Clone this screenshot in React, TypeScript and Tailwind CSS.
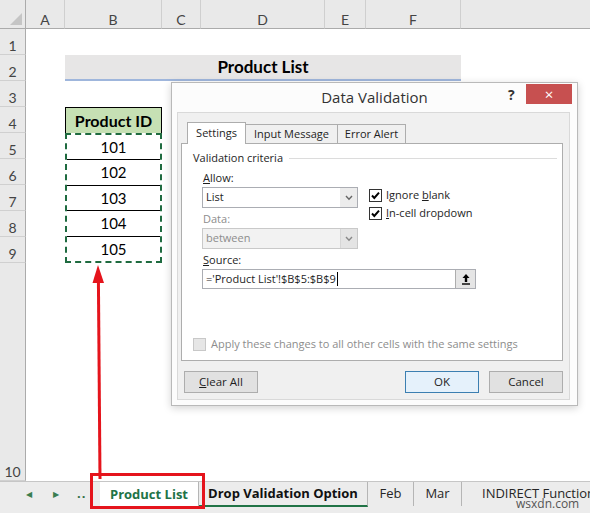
import React from 'react';

const cols = ['A', 'B', 'C', 'D', 'E', 'F', ''];
const ids = [101, 102, 103, 104, 105];

function Check({ on, disabled }: { on?: boolean; disabled?: boolean }) {
  return (
    <span
      className={`inline-flex items-center justify-center w-[13px] h-[13px] border ${
        disabled ? 'border-[#c8c8c8] bg-[#e6e6e6]' : 'border-[#333] bg-white'
      }`}
    >
      {on && (
        <svg viewBox="0 0 11 11" className="w-[11px] h-[11px]">
          <path d="M2 5.5l2.3 2.4L9 2.6" fill="none" stroke="#000" strokeWidth={2} />
        </svg>
      )}
    </span>
  );
}

function Chevron({ color }: { color: string }) {
  return (
    <svg viewBox="0 0 8 6" className="w-[8px] h-[6px]">
      <path d="M1 1l3 3.2L7 1" fill="none" stroke={color} strokeWidth={1.4} />
    </svg>
  );
}

function DataValidation() {
  return (
    <div className="absolute left-[171px] top-[82px] w-[407px] h-[324px] bg-[#fcfcfc] border border-[#b9b9b9] shadow-[0_2px_8px_rgba(0,0,0,0.18)] flex flex-col font-['Open_Sans'] text-[#1e1e1e]">
      {/* title bar */}
      <div className="h-[29px] relative flex items-center justify-center">
        <span className="text-[15px] text-[#333]">Data Validation</span>
        <span className="absolute left-[336px] top-[1px] text-[14px] font-bold text-[#333]">?</span>
        <div className="absolute left-[354px] top-[1px] w-[46px] h-[20px] bg-[#c75050] flex items-center justify-center text-white text-[15px] leading-none">
          ×
        </div>
      </div>

      <div className="ml-[5px] mr-[7px] flex-1 mb-[5px] bg-[#f0f0f0] border border-[#d9d9d9] flex flex-col px-[3px]">
        {/* tabs */}
        <div className="flex items-end h-[30px] pl-[6px] text-[11px]">
          <div className="w-[59px] h-[22px] bg-white border border-b-0 border-[#adadad] flex items-center justify-center relative top-[1px] z-10">
            Settings
          </div>
          <div className="w-[92px] h-[19px] bg-[#f0f0f0] border border-l-0 border-b-0 border-[#adadad] flex items-center justify-center">
            Input Message
          </div>
          <div className="w-[68px] h-[19px] bg-[#f0f0f0] border border-l-0 border-b-0 border-[#adadad] flex items-center justify-center">
            Error Alert
          </div>
        </div>

        {/* settings panel */}
        <div className="h-[218px] w-[382px] bg-white border border-[#adadad] text-[11px] pl-[11px] pt-[5px] flex flex-col">
          <div className="flex items-center gap-[6px] h-[18px]">
            <span>Validation criteria</span>
            <div className="flex-1 h-px bg-[#dcdcdc] mr-[5px]" />
          </div>
          <div className="pl-[9px] flex flex-col">
            <div className="flex gap-[11px]">
              <div className="flex flex-col w-[156px]">
                <span className="h-[18px] leading-[18px] mt-[2px] pl-[1px]">
                  <u>A</u>llow:
                </span>
                <div className="h-[21px] border border-[#abadb3] bg-white flex items-center">
                  <span className="flex-1 pl-[3px]">List</span>
                  <div className="w-[17px] h-full bg-[#ececec] flex items-center justify-center">
                    <Chevron color="#666" />
                  </div>
                </div>
                <span className="h-[18px] leading-[18px] mt-[2px] text-[#8d8d8d] pl-[1px]">Data:</span>
                <div className="h-[21px] border border-[#c9c9c9] bg-[#f2f2f2] flex items-center text-[#8d8d8d]">
                  <span className="flex-1 pl-[3px]">between</span>
                  <div className="w-[17px] h-full bg-[#e4e4e4] flex items-center justify-center border-l border-[#d6d6d6]">
                    <Chevron color="#888" />
                  </div>
                </div>
              </div>
              <div className="flex flex-col pt-[22px] gap-[5px]">
                <label className="flex items-center gap-[4px] h-[13px]">
                  <Check on />
                  <span>
                    Ignore <u>b</u>lank
                  </span>
                </label>
                <label className="flex items-center gap-[4px] h-[13px]">
                  <Check on />
                  <span>
                    <u>I</u>n-cell dropdown
                  </span>
                </label>
              </div>
            </div>
            <span className="h-[18px] leading-[18px] mt-[2px] pl-[1px]">
              <u>S</u>ource:
            </span>
            <div className="h-[20px] w-[274px] border border-[#abadb3] bg-white flex items-center">
              <span className="flex-1 pl-[3px] flex items-center">
                ='Product List'!$B$5:$B$9
                <span className="inline-block w-px h-[14px] bg-black ml-[1px]" />
              </span>
              <div className="w-[20px] h-[18px] bg-[#e5e5e5] border-l border-[#adadad] flex items-center justify-center">
                <svg viewBox="0 0 10 12" className="w-[10px] h-[12px]">
                  <path d="M5 1L1.5 5h2.3v4h2.4V5h2.3z" fill="#000" />
                  <rect x="1" y="10.3" width="8" height="1.4" fill="#000" />
                </svg>
              </div>
            </div>
          </div>
          <label className="flex items-center gap-[5px] mt-[47px] text-[#8d8d8d]">
            <Check disabled />
            <span>Apply these changes to all other cells with the same settings</span>
          </label>
        </div>

        {/* buttons */}
        <div className="flex items-center mt-[10px] px-[3px] text-[11.5px]">
          <div className="w-[74px] h-[22px] bg-[#e1e1e1] border border-[#adadad] flex items-center justify-center">
            <span>
              <u>C</u>lear All
            </span>
          </div>
          <div className="flex-1" />
          <div className="w-[74px] h-[22px] bg-[#e5f1fb] border border-[#3c7fb1] flex items-center justify-center">
            OK
          </div>
          <div className="w-[74px] h-[22px] ml-[10px] bg-[#e1e1e1] border border-[#adadad] flex items-center justify-center">
            Cancel
          </div>
        </div>
      </div>
    </div>
  );
}

function SheetTabs() {
  return (
    <div className="h-[32px] bg-[#ececec] border-t border-[#c6c6c6] flex items-start font-['Open_Sans'] text-[13px] text-[#262626] relative overflow-hidden">
      <div className="w-[92px] shrink-0 h-[24px] flex items-center">
        <span className="ml-[26px] text-[8px] text-[#3a7d50]">◀</span>
        <span className="ml-[21px] text-[8px] text-[#3a7d50]">▶</span>
        <span className="ml-[18px] font-bold text-[#2f6e44] tracking-[1px]">..</span>
      </div>
      <div className="w-[8px] shrink-0" />
      <div className="w-[99px] shrink-0 h-[25px] bg-white border-r border-[#b5b5b5] flex items-center justify-center font-bold text-[#217346]">
        Product List
      </div>
      <div className="w-[169px] shrink-0 h-[25px] border-b-[2px] border-[#217346] border-r border-r-[#b5b5b5] flex items-center justify-center font-bold text-[#111]">
        Drop Validation Option
      </div>
      <div className="w-[46px] shrink-0 h-[24px] border-r border-[#b5b5b5] flex items-center justify-center">Feb</div>
      <div className="w-[48px] shrink-0 h-[24px] border-r border-[#b5b5b5] flex items-center justify-center">Mar</div>
      <div className="shrink-0 h-[24px] pl-[20px] flex items-center whitespace-nowrap">INDIRECT Function</div>
      <span className="absolute left-[516px] top-[13px] text-[12px] text-[#555]">wsxdn.com</span>
    </div>
  );
}

export default function App() {
  return (
    <div className="w-[590px] h-[513px] relative overflow-hidden bg-white font-['Lato'] text-[14px]">
      <div className="grid grid-cols-[26px_39px_97px_39px_124px_41px_95px_1fr] grid-rows-[29px_repeat(9,26px)_218px]">
        {/* corner */}
        <div className="bg-[#e9e9e9] border-b border-r border-[#ababab] relative">
          <div className="absolute right-[3px] bottom-[3px] w-0 h-0 border-l-[12px] border-l-transparent border-b-[12px] border-b-[#c5c5c5]" />
        </div>
        {cols.map((c, i) => (
          <div
            key={i}
            className={`bg-[#e9e9e9] border-b border-[#ababab] flex items-end justify-center leading-[16px] text-[#444] ${
              c ? 'border-r border-r-[#cfcfcf]' : ''
            }`}
          >
            {c}
          </div>
        ))}

        {[1, 2, 3, 4, 5, 6, 7, 8, 9, 10].map((n) => (
          <div
            key={n}
            style={{ gridRow: n + 1 }}
            className="col-start-1 bg-[#e9e9e9] border-r border-[#ababab] border-b border-b-[#d0d0d0] flex items-end justify-center leading-[16px] text-[#444]"
          >
            {n}
          </div>
        ))}

        {/* title band across B2:F2 */}
        <div className="row-start-3 col-start-3 col-span-5 bg-[#e7e6e6] border-b-[2px] border-[#9fb6dc] flex items-center justify-center font-bold text-[17px] text-black">
          Product List
        </div>

        {/* Product ID column */}
        <div className="row-start-5 col-start-3 bg-[#c6e0b4] border border-black border-b-0 flex items-center justify-center font-bold text-[16px] text-black">
          Product ID
        </div>
        <div className="row-start-6 col-start-3 row-span-5 border-[2px] border-dashed border-[#1f6b40] flex flex-col">
          {ids.map((id, i) => (
            <div
              key={id}
              className={`flex-1 flex items-center justify-center text-[15px] text-black ${
                i < ids.length - 1 ? 'border-b border-black' : ''
              }`}
            >
              {id}
            </div>
          ))}
        </div>
      </div>

      <SheetTabs />

      <DataValidation />

      {/* red callout */}
      <svg className="absolute inset-0 pointer-events-none" width={590} height={513}>
        <line x1={100} y1={479} x2={98.4} y2={280} stroke="#e5141c" strokeWidth={3} />
        <polygon points="98,265 92.5,283 104,283" fill="#e5141c" />
        <rect x={91.5} y={474.5} width={112} height={33} fill="none" stroke="#e5141c" strokeWidth={3} />
      </svg>
    </div>
  );
}
